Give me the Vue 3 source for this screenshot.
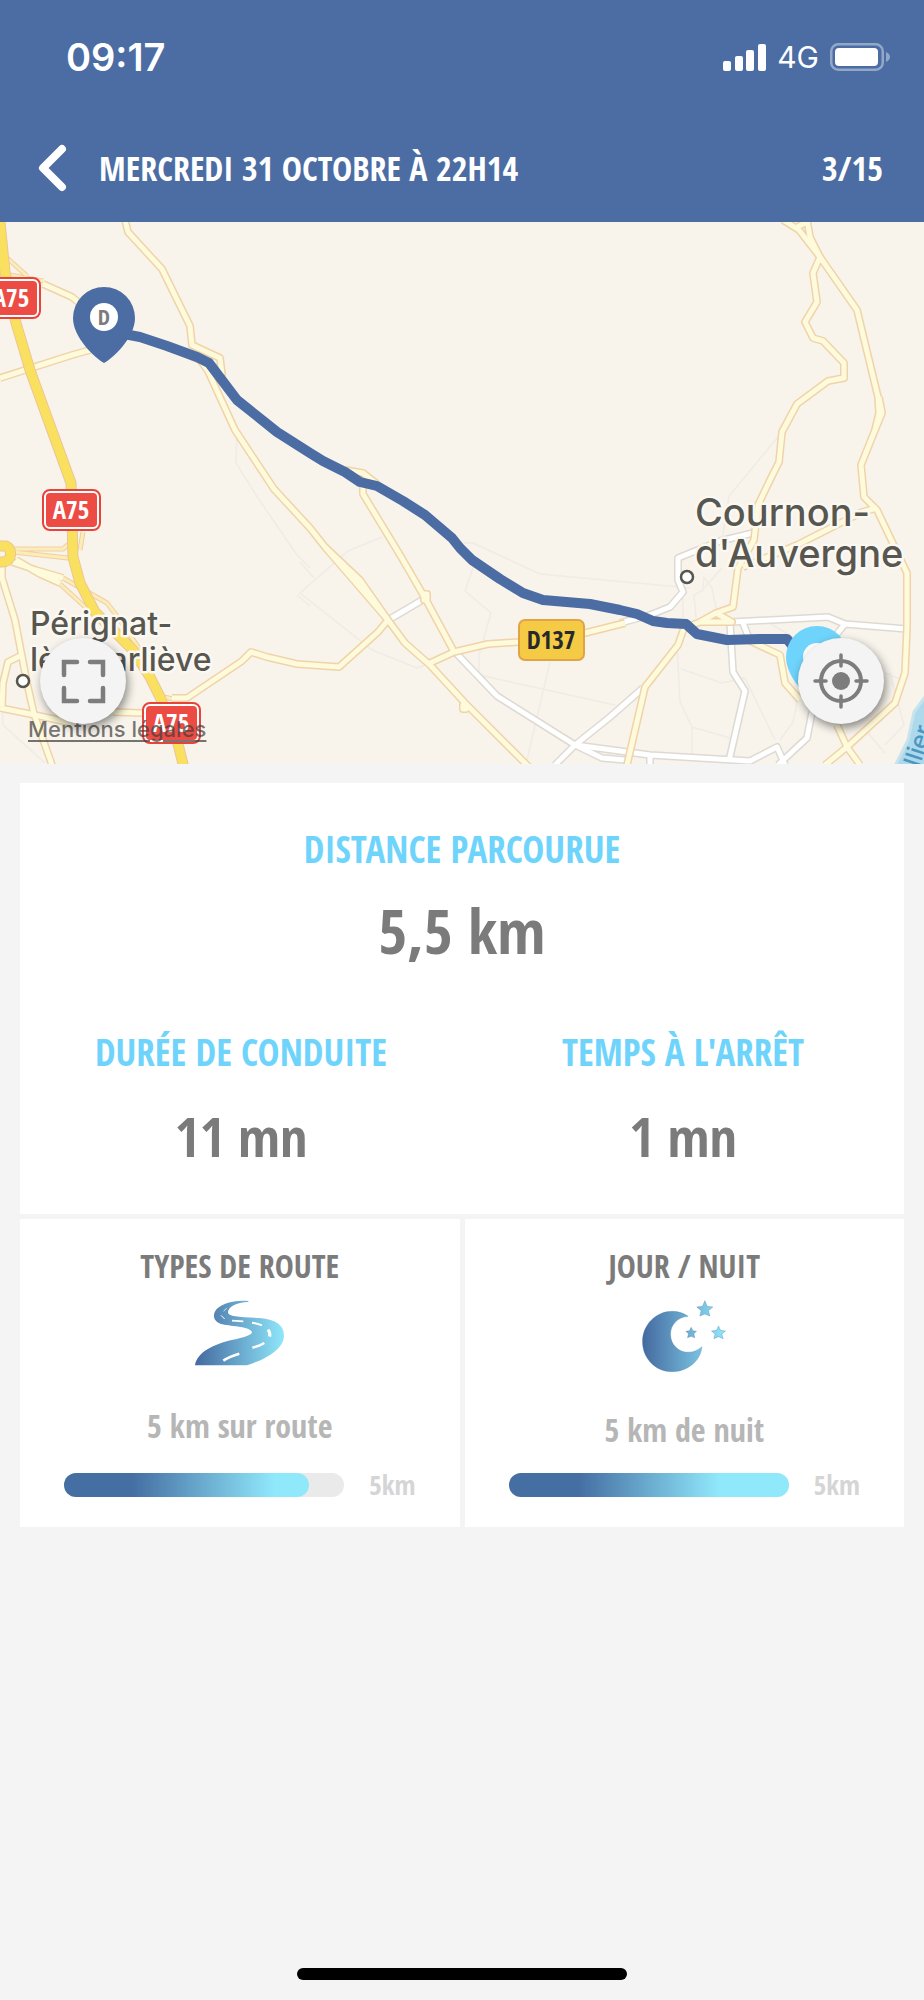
<script setup>
const faintRoads = [
  'M237 432 L236 463 L258 498 L297 555 L310 568',
  'M382 537 L348 551 L300 593 L372 650 L417 668 L430 663',
  'M297 595 L310 606 M300 562 L314 578',
  'M460 543 L473 543 L540 574 L690 588',
  'M473 568 L465 591 L491 613 L479 655 L479 675 L615 705',
  'M550 662 L527 760',
  'M778 437 L729 496 L722 540',
  'M2 700 L3 725 L45 763',
  'M683 592 V618 M694 595 L696 618 M694 595 L703 590 L704 577 L712 588 L718 618 M704 588 L722 568',
  'M677 645 L680 702 L692 727 V755 M692 727 L730 738',
  'M681 669 L722 683 L745 678 L775 740 M765 620 L797 640 M800 690 L793 722 L780 740',
  'M868 733 L885 753 M890 673 L904 725 L885 745 M885 673 L900 679'
]

const whiteRoads = [
  'M753 533 L720 541 L678 558 L678 580 L683 592 L670 607 L650 615 L620 623',
  'M732 622 L828 617 L845 624 L907 629',
  'M845 624 L832 640',
  'M730 623 L733 672 L745 691 L729 761',
  'M743 623 L750 641',
  'M812 712 L807 738 L778 765',
  'M575 745 L650 755 L750 761 L777 747 L785 765',
  'M575 745 L602 758 L625 760 M650 755 V765',
  'M643 688 L610 717 L575 745 L555 765',
  'M456 653 L497 696 L575 745',
  'M390 619 L424 599'
]

const yellowRoads = [
  'M125 220 L128 232 L162 269 L190 326 L192 345 L220 358 L222 374 L214 366',
  'M133 335 L167 346 L200 360 L208 371 L235 430 L274 489 L310 528 L325 547 L388 620 L405 643 L430 665 L465 703 L530 768',
  'M325 547 L360 580 L388 620',
  'M345 470 L363 473 L377 484 M363 487 V494 L400 555 L425 598 L452 648 L454 652',
  'M430 663 L454 652 L488 644 L518 642 L585 633 L625 623 M700 622 L716 613 L733 607 L738 568 L754 540 L758 505 L770 480 L779 462 L782 432 L797 404 L828 381 L844 378 L844 363 L823 341 L813 338 L805 322 L817 302 L813 273 L820 257',
  'M388 620 L378 632 L339 667 L297 664 L267 657 L251 652 L242 661 L187 698 L172 698',
  'M142 713 L113 712 M72 723 L35 715 L0 708',
  'M2 560 L2 578 L15 620 L27 683 L34 714 L52 765',
  'M20 656 L8 662 L3 683 L2 706',
  'M12 562 L36 570 L63 578 M16 560 L40 574 L60 583',
  'M43 284 L72 297 L84 307',
  'M0 378 L72 355 L90 350',
  'M783 220 L799 230 L820 257 L857 310 L878 397 L879 413 L875 430 L861 465 L864 497 L877 510 L907 573 L907 627 L905 673 L895 703 L847 747 L825 765',
  'M807 220 L810 237 L820 257 M797 227 L807 222 M879 397 L882 413 L875 430',
  'M877 508 L862 512 L797 545 L743 567',
  'M700 622 L684 628 L678 645 L645 687 L627 765',
  'M716 613 L732 622 L700 622',
  'M750 641 L780 655 L785 683 L800 700 M837 725 L847 747 L860 765',
  'M424 594 h3 v6 h-3z M463 705 h3 v4 h-3z'
]

const ramps = [
  'M6 257 L27 276 M10 275 L43 281',
  'M15 549 L63 549 L70 543 M13 552 L68 558 M83 532 L80 550',
  'M63 578 L107 603 L120 620 L140 650 M60 584 L95 616',
  'M160 696 L177 700'
]

const motorways = [
  'M0 222 L5 272 L16 323 L30 370 L47 417 L71 483 L73 557 L80 583 L95 612 L133 650 L150 677 L160 697 L177 740 L184 768',
  'M-6 546 H6 Q12 549 10 557 Q8 562 2 562 H-6'
]

const route = 'M124 334 L140 337 L167 346 L197 357 L209 363 L237 400 L277 432 L310 453 L323 461 L345 472 L360 482 L377 486 L403 501 L425 515 L452 538 L460 548 L472 560 L500 579 L523 593 L543 600 L590 604 L620 610 L637 614 L653 621 L667 623 L686 624 L697 634 L727 640 L760 639 L787 639 L796 650'

const stats = [
  { label: 'DURÉE DE CONDUITE', value: '11 mn' },
  { label: "TEMPS À L'ARRÊT", value: '1 mn' }
]

const panels = [
  { id: 'road', title: 'TYPES DE ROUTE', text: '5 km sur route', total: '5km', percent: 87.5 },
  { id: 'night', title: 'JOUR / NUIT', text: '5 km de nuit', total: '5km', percent: 100 }
]
</script>

<template>
  <div class="screen">
    <header class="top">
      <div class="status">
        <span class="clock">09:17</span>
        <div class="status-right">
          <svg class="signal" viewBox="0 0 43 27" aria-hidden="true">
            <rect x="0" y="17" width="8" height="10" rx="2" />
            <rect x="12" y="12" width="8" height="15" rx="2" />
            <rect x="23" y="6" width="8" height="21" rx="2" />
            <rect x="35" y="0" width="8" height="27" rx="2" />
          </svg>
          <span class="network">4G</span>
          <svg class="battery" viewBox="0 0 60 28" aria-hidden="true">
            <rect x="1.25" y="1.25" width="51.5" height="25.5" rx="7" fill="none" stroke="#fff" stroke-opacity=".4" stroke-width="2.5" />
            <rect x="5" y="5" width="43" height="18" rx="4" fill="#fff" />
            <path d="M56 9 Q60 11 60 14 Q60 17 56 19z" fill="#fff" fill-opacity=".4" />
          </svg>
        </div>
      </div>
      <nav class="bar">
        <button class="back" type="button" aria-label="Retour">
          <svg viewBox="0 0 28 46" aria-hidden="true"><path d="M24 4 L5 23 L24 42" fill="none" stroke="#fff" stroke-width="8" stroke-linecap="round" stroke-linejoin="round" /></svg>
        </button>
        <h1 class="title">MERCREDI 31 OCTOBRE À 22H14</h1>
        <span class="counter">3/15</span>
      </nav>
    </header>

    <section class="map" aria-label="Trajet">
      <svg class="map-canvas" viewBox="0 222 924 542">
        <rect x="0" y="222" width="924" height="542" fill="#f8f4ec" />
        <g class="roads">
          <path v-for="d in faintRoads" :key="d" :d="d" stroke="#efebe5" stroke-width="1.5" />
          <path d="M930 690 L914 712 L908 740 L895 766 H930z" fill="#add9ed" stroke="#c8e3ec" stroke-width="3" />
          <path v-for="d in whiteRoads" :key="'wc' + d" :d="d" stroke="#dedad3" stroke-width="8" />
          <path v-for="d in whiteRoads" :key="'w' + d" :d="d" stroke="#fff" stroke-width="5" />
          <path v-for="d in ramps" :key="'rc' + d" :d="d" stroke="#f0cfa4" stroke-width="5" />
          <path v-for="d in ramps" :key="'r' + d" :d="d" stroke="#fbedb8" stroke-width="3" />
          <path v-for="d in yellowRoads" :key="'yc' + d" :d="d" stroke="#f1d3a9" stroke-width="8" />
          <path v-for="d in yellowRoads" :key="'y' + d" :d="d" stroke="#fdfbdb" stroke-width="5" />
          <path v-for="d in motorways" :key="'mc' + d" :d="d" stroke="#ecc596" stroke-width="11" />
          <path v-for="d in motorways" :key="'m' + d" :d="d" stroke="#fae05f" stroke-width="9" />
        </g>

        <path :d="route" fill="none" stroke="#4b6da3" stroke-width="10" stroke-linejoin="round" />

        <g class="shields">
          <g v-for="s in [[-18, 277], [42, 489], [142, 702]]" :key="s[1]">
            <rect :x="s[0] + 1" :y="s[1] + 1" width="57" height="40" rx="7" fill="#fff" stroke="#e8433b" stroke-width="2" />
            <rect :x="s[0] + 4" :y="s[1] + 4" width="51" height="34" rx="4" fill="#ec4c44" />
            <text :x="s[0] + 29" :y="s[1] + 30" class="shield-text">A75</text>
          </g>
          <rect x="519" y="620" width="65" height="40" rx="6" fill="#f5ca45" stroke="#e0a447" stroke-width="2" />
          <text x="551" y="649" class="shield-text dark">D137</text>
        </g>

        <g class="places">
          <circle cx="23" cy="681" r="6" />
          <circle cx="687" cy="577" r="6" />
          <text x="30" y="635" class="town">Pérignat-</text>
          <text x="30" y="671" class="town">lès-Sarliève</text>
          <text x="695" y="526" class="city">Cournon-</text>
          <text x="695" y="567" class="city">d'Auvergne</text>
          <text x="914" y="784" class="river" transform="rotate(-72 914 784)">Allier</text>
        </g>

        <path d="M104 363 C96 359 73 338 73 318 A31 31 0 0 1 135 318 C135 338 112 359 104 363z" fill="#4b6da3" />
        <circle cx="104" cy="317" r="14" fill="#fff" />
        <text x="104" y="325" class="pin-text">D</text>
        <path d="M817 703 C809 699 786 678 786 657 A31 31 0 0 1 848 657 C848 678 825 699 817 703z" fill="#6fd4fb" />
        <circle cx="817" cy="657" r="14" fill="#fff" />
      </svg>

      <a class="legal" href="#mentions">Mentions légales</a>
      <button class="round left" type="button" aria-label="Plein écran">
        <svg viewBox="0 0 86 86" aria-hidden="true">
          <path d="M24 37 V24 H37 M50 24 H63 V37 M63 50 V63 H50 M37 63 H24 V50" fill="none" stroke="#7d7d7d" stroke-width="4.5" stroke-linecap="round" />
        </svg>
      </button>
      <button class="round right" type="button" aria-label="Me localiser">
        <svg viewBox="0 0 86 86" aria-hidden="true" fill="none" stroke="#7d7d7d">
          <circle cx="43" cy="43" r="20" stroke-width="4" />
          <circle cx="43" cy="43" r="9" fill="#7d7d7d" stroke="none" />
          <path d="M43 17 V28 M43 58 V69 M17 43 H28 M58 43 H69" stroke-width="3.5" stroke-linecap="round" />
        </svg>
      </button>
    </section>

    <main class="content">
      <section class="card summary">
        <div class="stat">
          <h2 class="label">DISTANCE PARCOURUE</h2>
          <p class="total">5,5 km</p>
        </div>
        <div class="pair">
          <div v-for="s in stats" :key="s.label" class="stat">
            <h2 class="label">{{ s.label }}</h2>
            <p class="value">{{ s.value }}</p>
          </div>
        </div>
      </section>

      <section class="panels">
        <article v-for="p in panels" :key="p.id" class="card panel">
          <h3 class="panel-title">{{ p.title }}</h3>
          <svg v-if="p.id === 'road'" class="icon-road" viewBox="586 268 267 204" aria-hidden="true">
            <defs>
              <linearGradient id="road-fill" x1="0" x2="1" y1="0" y2="0">
                <stop offset="0" stop-color="#44699f" />
                <stop offset="1" stop-color="#8fe7fb" />
              </linearGradient>
            </defs>
            <path fill="url(#road-fill)" d="M586 464 C592 424 642 400 700 387 C730 381 757 374 757 364 C750 348 700 348 668 341 C640 334 637 312 651 295 C670 275 715 267 746 271 L746 274 C710 274 685 290 685 305 C685 319 720 319 780 322 C830 326 853 345 853 375 C853 410 810 442 742 464z" />
            <g fill="none" stroke="#fff" stroke-width="6">
              <path d="M681 292 L672 302" stroke-width="2" />
              <path d="M664 314 L675 325" stroke-width="3" />
              <path d="M697 330 L731 332" stroke-width="5" />
              <path d="M757 336 Q772 338 787 344" />
              <path d="M805 357 Q813 367 810 378" stroke-width="9" />
              <path d="M758 411 Q780 406 794 397" stroke-width="7" />
              <path d="M671 450 Q690 437 719 429" stroke-width="8" />
            </g>
          </svg>
          <svg v-else class="icon-moon" viewBox="549 270 251 216" aria-hidden="true">
            <defs>
              <linearGradient id="night-fill" gradientUnits="userSpaceOnUse" x1="549" x2="800" y1="0" y2="0">
                <stop offset="0" stop-color="#44699f" />
                <stop offset="1" stop-color="#8fe7fb" />
              </linearGradient>
            </defs>
            <g fill="url(#night-fill)" stroke="#3f7fae" stroke-opacity=".5" stroke-width="2">
              <path d="M687 319 C655 321 634 345 634 373 C634 404 658 427 687 427 C703 427 718 420 728 410 C725 452 685 485 639 485 C589 485 550 445 550 395 C550 345 590 304 639 304 C657 304 673 309 687 319z" />
              <path d="M737 272 L744 289 L761 291 L748 302 L752 318 L737 312 L722 318 L726 302 L713 291 L730 289z" />
              <path d="M778 348 L784 361 L799 363 L788 372 L792 386 L778 380 L764 386 L768 372 L757 363 L772 361z" />
              <path d="M696 352 L701 362 L712 364 L704 371 L707 383 L696 379 L685 383 L688 371 L680 364 L691 362z" />
            </g>
          </svg>
          <p class="panel-text">{{ p.text }}</p>
          <div class="meter">
            <div class="track" role="progressbar" :aria-label="p.title" aria-valuemin="0" aria-valuemax="100" :aria-valuenow="p.percent">
              <div class="fill" :class="p.id" :style="{ width: p.percent + '%' }"></div>
            </div>
            <span class="meter-label">{{ p.total }}</span>
          </div>
        </article>
      </section>
    </main>

    <div class="home"></div>
  </div>
</template>

<style>
body { background: #f4f4f4; }
</style>

<style scoped>
.screen {
  display: flex;
  flex-direction: column;
  min-height: 100vh;
  box-sizing: border-box;
  background: #f4f4f4;
  color: #7b7b7b;
  font-family: "Open Sans Condensed", "Roboto Condensed", "Open Sans", sans-serif;
  font-weight: 700;
}
h1, h2, h3, p { margin: 0; font-weight: 700; }
button { border: 0; padding: 0; background: none; cursor: pointer; }

.top { background: #4b6da3; color: #fff; }
.status {
  display: flex;
  align-items: center;
  justify-content: space-between;
  height: 114px;
  padding: 0 34px 0 66px;
  font-family: Inter, "Liberation Sans", sans-serif;
}
.clock { font-size: 38px; font-weight: 600; }
.status-right { display: flex; align-items: center; gap: 11px; }
.signal { width: 43px; height: 27px; fill: #fff; }
.network { font-size: 30px; font-weight: 400; }
.battery { width: 60px; height: 28px; }
.bar { display: flex; align-items: center; height: 108px; padding: 0 41px 0 38px; font-size: 34px; }
.back { display: flex; margin-right: 33px; }
.back svg { width: 28px; height: 46px; overflow: visible; }
.title { flex: 1; font-size: 34px; }

.map { position: relative; overflow: hidden; }
.map-canvas { display: block; width: 100%; height: auto; }
.roads { fill: none; stroke-linejoin: round; }
.shield-text {
  font: 700 25px "Open Sans Condensed", "Roboto Condensed", sans-serif;
  fill: #fff;
  text-anchor: middle;
}
.dark { fill: #26292c; }
.pin-text { font: 700 22px "Open Sans Condensed", "Roboto Condensed", sans-serif; fill: #7b7b7b; text-anchor: middle; }
.places { font-family: Inter, "Liberation Sans", sans-serif; font-optical-sizing: none; }
.places text { fill: #57564f; stroke: #fbf8f2; stroke-width: 5px; stroke-linejoin: round; paint-order: stroke; }
.places circle { fill: #fff; stroke: #57564f; stroke-width: 2.5px; }
.town { font-size: 32px; font-weight: 500; }
.city { font-size: 38px; font-weight: 500; }
.places .river { font-size: 24px; font-weight: 500; fill: #4b97c0; stroke: none; }
.legal {
  position: absolute;
  left: 28px;
  bottom: 23px;
  font: 500 22px/24px Inter, "Liberation Sans", sans-serif;
  font-optical-sizing: none;
  color: rgba(60, 60, 60, 0.7);
  text-decoration: underline;
  text-decoration-thickness: 2px;
  text-underline-offset: 3px;
}
.round {
  position: absolute;
  bottom: 40px;
  width: 86px;
  height: 86px;
  border-radius: 50%;
  background: #f4f4f4;
  box-shadow: 2px 4px 10px rgba(0, 0, 0, 0.45);
}
.round svg { display: block; width: 86px; height: 86px; }
.left { left: 40px; }
.right { right: 40px; }

.content { padding: 19px 20px 0; }
.card { background: #fff; text-align: center; }
.summary { padding: 42px 0; }
.label { font-size: 37px; line-height: 48px; color: #6fd4fb; }
.total { margin-top: 17px; font-size: 62px; line-height: 80px; }
.pair { display: grid; grid-template-columns: 1fr 1fr; margin-top: 58px; }
.value { margin-top: 24px; font-size: 54px; line-height: 72px; }

.panels { display: grid; grid-template-columns: 1fr 1fr; gap: 5px; margin-top: 5px; }
.panel { display: flex; flex-direction: column; align-items: center; padding: 25px 44px 24px; }
.panel-title { margin-bottom: 12px; font-size: 32px; line-height: 44px; }
.icon-road { width: 89px; height: 68px; }
.icon-moon { width: 84px; height: 72px; }
.panel-text { margin: 36px 0 15px; font-size: 32px; line-height: 44px; color: #b6b6b6; }
.meter { display: flex; align-items: center; align-self: stretch; gap: 25px; margin-top: auto; }
.meter-label { font-size: 27px; line-height: 36px; color: #d5d5d5; }
.track { flex: 1; height: 24px; border-radius: 12px; background: #eaeaea; }
.fill { height: 24px; border-radius: 12px; background: linear-gradient(90deg, #456fa3 28%, #90e8fb 86%); }
.fill.night { background: linear-gradient(90deg, #456fa3 25%, #90e8fb 75%); }

.home { width: 330px; max-width: 60%; height: 12px; margin: auto auto 20px; border-radius: 6px; background: #000; }
</style>
